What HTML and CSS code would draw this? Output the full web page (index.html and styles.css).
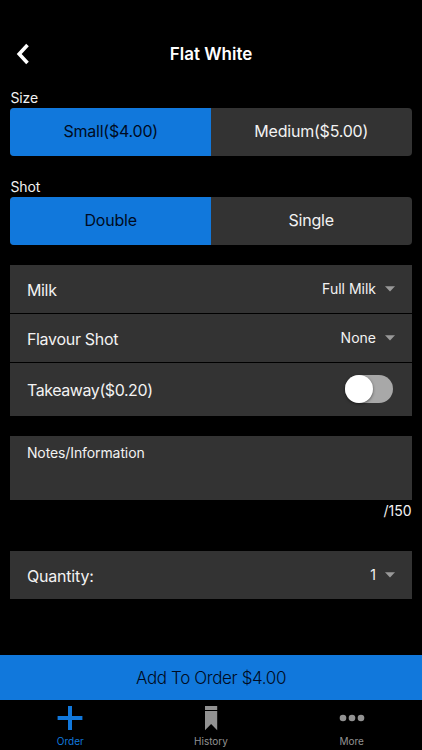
FILE: index.html
```html
<!DOCTYPE html>
<html lang="en">
<head>
<meta charset="utf-8">
<title>Flat White</title>
<link rel="stylesheet" href="styles.css">
</head>
<body>
<div class="screen">
  <header class="header">
    <svg class="back" width="16" height="22" viewBox="0 0 16 22"><path d="M12.5 2 4.2 11l8.3 9" fill="none" stroke="#fff" stroke-width="3.6"/></svg>
    <h1 class="title">Flat White</h1>
  </header>
  <main class="content">
    <section class="group">
      <div class="label">Size</div>
      <div class="segments">
        <div class="segment active">Small($4.00)</div>
        <div class="segment">Medium($5.00)</div>
      </div>
    </section>
    <section class="group shot">
      <div class="label">Shot</div>
      <div class="segments">
        <div class="segment active">Double</div>
        <div class="segment">Single</div>
      </div>
    </section>
    <section class="list">
      <div class="row"><span class="name">Milk</span><span class="value">Full Milk</span><svg class="caret" width="10" height="6" viewBox="0 0 10 6"><path d="M0 0.2h10L5 5.4z"/></svg></div>
      <div class="row"><span class="name">Flavour Shot</span><span class="value">None</span><svg class="caret" width="10" height="6" viewBox="0 0 10 6"><path d="M0 0.2h10L5 5.4z"/></svg></div>
      <div class="row takeaway"><span class="name">Takeaway($0.20)</span><span class="switch"><span class="knob"></span></span></div>
    </section>
    <section class="notes">Notes/Information</section>
    <div class="counter">/150</div>
    <section class="row quantity"><span class="name">Quantity:</span><span class="value">1</span><svg class="caret" width="10" height="6" viewBox="0 0 10 6"><path d="M0 0.2h10L5 5.4z"/></svg></section>
  </main>
  <div class="cta">Add To Order $4.00</div>
  <nav class="tabs">
    <div class="tab current"><svg width="26" height="26" viewBox="0 0 26 26"><path d="M11 1h4v10h10.4v4H15v10h-4V15H.6v-4H11z"/></svg><span>Order</span></div>
    <div class="tab"><svg width="26" height="26" viewBox="0 0 26 26"><path d="M7 1h12.2v4H7zM7 6h12.2v19.2L13.1 19 7 25.2z"/></svg><span>History</span></div>
    <div class="tab"><svg width="26" height="26" viewBox="0 0 26 26"><circle cx="4" cy="13" r="3.3"/><circle cx="13" cy="13" r="3.3"/><circle cx="22" cy="13" r="3.3"/></svg><span>More</span></div>
  </nav>
</div>
</body>
</html>
```
FILE: styles.css
```css
* { box-sizing: border-box; }
body { margin: 0; background: #000; color: #f2f2f2; font-family: Inter, sans-serif; }
.screen { width: 422px; height: 750px; display: flex; flex-direction: column; overflow: hidden; }
.header { height: 88px; padding: 20px 16px 0 15px; display: grid; grid-template-columns: 16px 1fr 16px; align-items: center; }
.title { margin: 0; padding-left: 1px; color: #fff; font-size: 17px; line-height: 20px; font-weight: 600; text-align: center; }
.content { height: 567px; padding: 0 10.5px 0 10.4px; }
.label { height: 20px; line-height: 20px; font-size: 14px; letter-spacing: -.1px; }
.segments { height: 48px; display: grid; grid-template-columns: 1fr 1fr; border-radius: 4px; overflow: hidden; background: #333; }
.segment { line-height: 46px; font-size: 16px; letter-spacing: -.22px; text-align: center; }
.active { background: #1178dc; color: #000b22; }
.shot { margin-top: 21px; }
.list { margin-top: 20px; display: grid; gap: 1px; }
.row { height: 48px; padding: 0 16.5px; background: #333; display: flex; align-items: center; }
.name { flex: 1; font-size: 16px; line-height: 20px; padding-top: 1px; letter-spacing: -.3px; }
.value { font-size: 14px; line-height: 18px; margin-right: 9px; }
.caret { fill: #999; }
.takeaway { height: 53px; }
.takeaway .name { padding: 0; letter-spacing: -.42px; }
.switch { width: 48px; height: 28px; border-radius: 14px; background: #a8a8a8; margin: 0 2px 2px 0; }
.knob { display: block; width: 28px; height: 28px; border-radius: 50%; background: #fff; box-shadow: 0 1px 3px rgba(0, 0, 0, .5); }
.notes { margin-top: 20px; height: 64px; padding: 7px 16.5px; background: #333; font-size: 14px; line-height: 20px; letter-spacing: -.1px; }
.counter { height: 20px; line-height: 22px; font-size: 14px; text-align: right; }
.quantity { margin-top: 31px; }
.quantity .name { letter-spacing: -.18px; }
.cta { height: 45px; background: #1178dc; color: #000b22; font-size: 17px; font-weight: 300; letter-spacing: -.38px; line-height: 46px; text-align: center; }
.tabs { flex: 1; display: grid; grid-template-columns: repeat(3, 1fr); }
.tab { display: flex; flex-direction: column; align-items: center; padding-top: 5px; font-size: 10px; line-height: 12px; color: #929292; fill: #929292; }
.tab span { margin-top: 4px; }
.current { color: #1178dc; fill: #1178dc; }
```
